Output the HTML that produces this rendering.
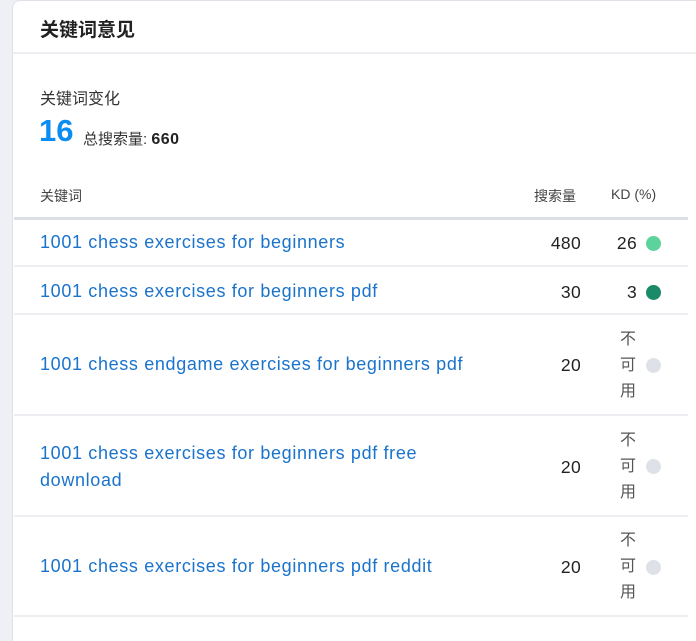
<!DOCTYPE html>
<html><head><meta charset="utf-8"><style>
body{margin:0;width:696px;height:624px;background:#eef0f5;overflow:hidden;font-family:"Liberation Sans","Noto Sans CJK SC",sans-serif;}
.card{position:absolute;left:12px;top:0;width:700px;height:640px;background:#fff;border-left:1px solid #dfe1e8;border-top:1px solid #dfe1e8;border-radius:8px 0 0 0;}
.a{position:absolute;white-space:nowrap;}
.line{position:absolute;left:14px;width:674px;height:2px;background:#eceef2;}
.lk{color:#1a73cc;font-size:18px;letter-spacing:0.65px;line-height:27px;}
.num{color:#222;font-size:17.5px;letter-spacing:0.3px;text-align:right;width:60px;}
.dot{position:absolute;width:15px;height:15px;border-radius:50%;}
.na{color:#555;font-size:16px;line-height:26px;text-align:center;width:20px;}
</style></head><body>
<div class="card"></div>
<div class="a" style="left:40px;top:15px;font-size:19px;color:#222;font-weight:bold;">关键词意见</div>
<div style="position:absolute;left:13px;top:52px;width:690px;height:2px;background:#eceef2"></div>
<div class="a" style="left:40px;top:85px;font-size:16px;color:#333;">关键词变化</div>
<div class="a" style="left:39px;top:113px;font-size:31px;color:#0a8cf0;font-weight:bold;">16</div>
<div class="a" style="left:83px;top:128px;font-size:15px;color:#333;">总搜索量: <b style="font-size:16px;color:#222;letter-spacing:0.5px">660</b></div>
<div class="a" style="left:40px;top:186px;font-size:14px;color:#444;">关键词</div>
<div class="a" style="left:534px;top:186px;font-size:14px;color:#444;">搜索量</div>
<div class="a" style="left:611px;top:186px;font-size:14px;color:#444;">KD (%)</div>
<div class="line" style="top:217px;height:3px;background:#dcdfe6"></div>
<div class="a lk" style="left:40px;top:229px;">1001 chess exercises for beginners</div>
<div class="a num" style="left:521px;top:233px;">480</div>
<div class="a num" style="left:577px;top:233px;">26</div>
<div class="dot" style="left:646px;top:236px;background:#5dd39c"></div>
<div class="line" style="top:265px"></div>
<div class="a lk" style="left:40px;top:278px;">1001 chess exercises for beginners pdf</div>
<div class="a num" style="left:521px;top:282px;">30</div>
<div class="a num" style="left:577px;top:282px;">3</div>
<div class="dot" style="left:646px;top:285px;background:#1a8a68"></div>
<div class="line" style="top:313px"></div>
<div class="a lk" style="left:40px;top:351px;">1001 chess endgame exercises for beginners pdf</div>
<div class="a num" style="left:521px;top:355px;">20</div>
<div class="a na" style="left:618px;top:327px;">不<br>可<br>用</div>
<div class="dot" style="left:646px;top:358px;background:#dfe1e8"></div>
<div class="line" style="top:414px"></div>
<div class="a lk" style="left:40px;top:440px;">1001 chess exercises for beginners pdf free<br>download</div>
<div class="a num" style="left:521px;top:457px;">20</div>
<div class="a na" style="left:618px;top:428px;">不<br>可<br>用</div>
<div class="dot" style="left:646px;top:459px;background:#dfe1e8"></div>
<div class="line" style="top:515px"></div>
<div class="a lk" style="left:40px;top:553px;">1001 chess exercises for beginners pdf reddit</div>
<div class="a num" style="left:521px;top:557px;">20</div>
<div class="a na" style="left:618px;top:528px;">不<br>可<br>用</div>
<div class="dot" style="left:646px;top:560px;background:#dfe1e8"></div>
<div class="line" style="top:615px"></div>
</body></html>
